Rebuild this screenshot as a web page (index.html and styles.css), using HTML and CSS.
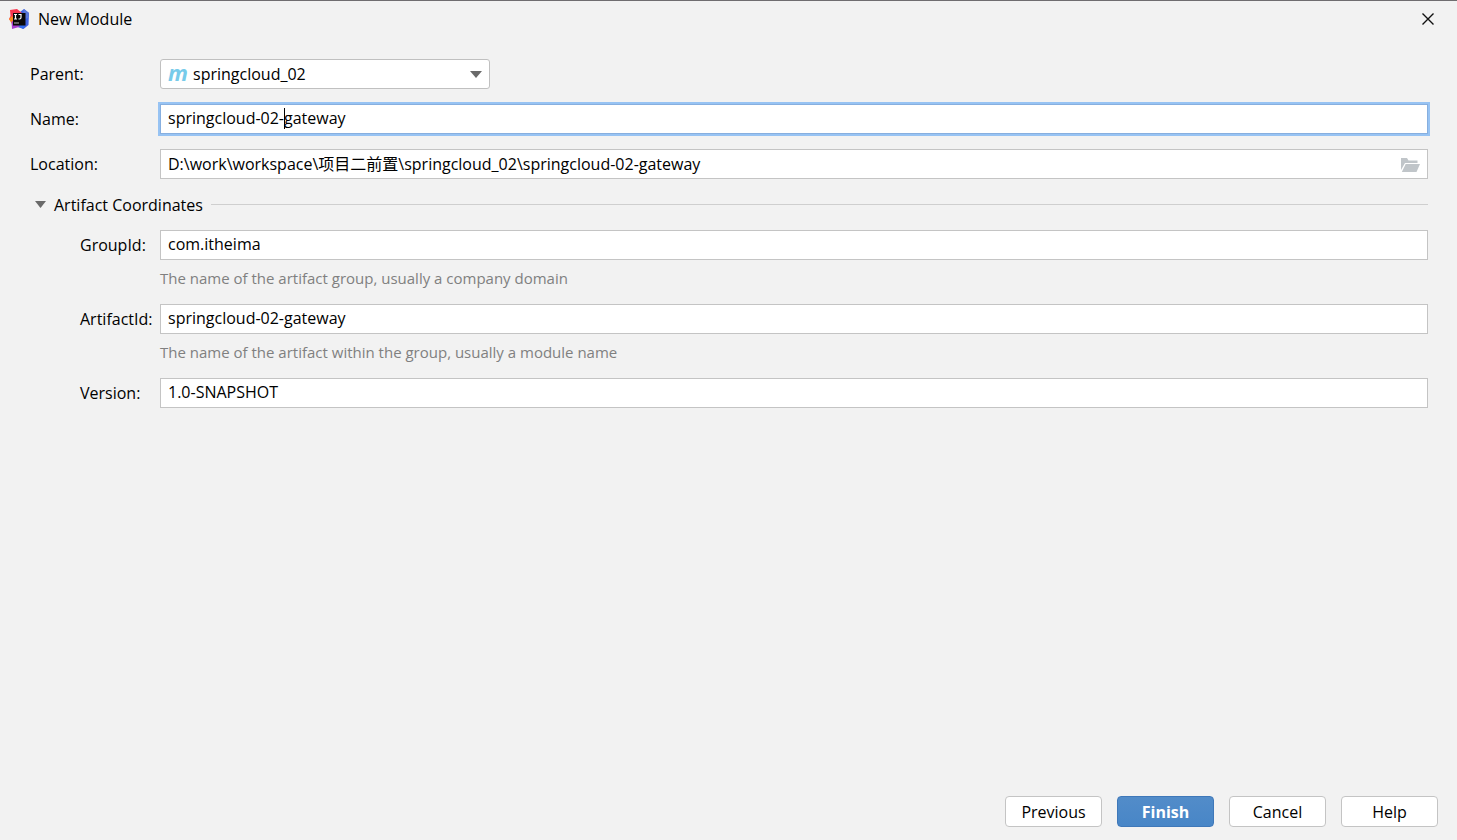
FILE: index.html
```html
<!DOCTYPE html>
<html lang="en">
<head>
<meta charset="utf-8">
<title>New Module</title>
<link rel="stylesheet" href="styles.css">
</head>
<body>
<form class="dialog">
  <header class="titlebar">
    <svg class="logo" width="20" height="20" viewBox="0 0 20 20" aria-hidden="true">
      <path d="M11 3 15 0l5 4-.5 12-5 4-6-2z" fill="#3f62e0"/>
      <path d="M15 0l5 4-1 5-6 2z" fill="#5a78d8"/>
      <path d="M1 1 8 0l5 4-2 7-8 3-3-4 1.500-3z" fill="#f8364f"/>
      <path d="M0 10l3-3 3 5-3 3z" fill="#fb8a1e"/>
      <path d="M2.500 13 6 10l7 6-3 2-7 2z" fill="#a63fd0"/>
      <path d="M9 16h7l-2 4z" fill="#2f6df0"/>
      <path d="M4 4h12.500v12.500H4z" fill="#0a0808"/>
      <path d="M5 5.500h3M6.500 5.500v4.500M5 10h3M9.500 5.500h2.500v3q0 1.500-1.500 1.500h-1" fill="none" stroke="#fff" stroke-width="1.200"/>
      <path d="M5 13.500h5v1H5z" fill="#bbb"/>
    </svg>
    <h1 class="title">New Module</h1>
    <button class="close" type="button" aria-label="Close">
      <svg width="14" height="14" viewBox="0 0 14 14" aria-hidden="true"><path d="M1.500 1.500l11 11M12.500 1.500l-11 11" stroke="#111" stroke-width="1.400" fill="none"/></svg>
    </button>
  </header>

  <main class="content">
    <div class="row">
      <label for="parent">Parent:</label>
      <div class="combo">
        <span class="maven" aria-hidden="true">m</span>
        <select id="parent"><option>springcloud_02</option></select>
        <svg class="arrow" width="12" height="7" viewBox="0 0 12 7" aria-hidden="true"><path d="M0 0h12L6 7z" fill="#6a6a6a"/></svg>
      </div>
    </div>
    <div class="row">
      <label for="name">Name:</label>
      <div class="box">
        <input class="field focused" id="name" type="text" value="springcloud-02-gateway">
        <span class="caret"></span>
      </div>
    </div>
    <div class="row">
      <label for="location">Location:</label>
      <div class="box">
        <input class="field" id="location" type="text" value="D:\work\workspace\项目二前置\springcloud_02\springcloud-02-gateway">
        <button class="browse" type="button" aria-label="Browse">
          <svg width="19" height="14" viewBox="0 0 19 14" aria-hidden="true"><path d="M0 0h6l1.500 2.500H16.500V5H4L0 12z" fill="#c0c5c9"/><path d="M4.700 6H19l-3.500 8H.800z" fill="#c0c5c9"/></svg>
        </button>
      </div>
    </div>

    <button class="section" type="button" aria-expanded="true">
      <svg width="11" height="7" viewBox="0 0 11 7" aria-hidden="true"><path d="M0 0h11L5.500 7z" fill="#6a6a6a"/></svg>
      <span>Artifact Coordinates</span>
      <span class="rule"></span>
    </button>

    <div class="row nested">
      <label for="group">GroupId:</label>
      <input class="field" id="group" type="text" value="com.itheima" aria-describedby="group-hint">
      <p class="hint" id="group-hint">The name of the artifact group, usually a company domain</p>
    </div>
    <div class="row nested">
      <label for="artifact">ArtifactId:</label>
      <input class="field" id="artifact" type="text" value="springcloud-02-gateway" aria-describedby="artifact-hint">
      <p class="hint" id="artifact-hint">The name of the artifact within the group, usually a module name</p>
    </div>
    <div class="row nested">
      <label for="version">Version:</label>
      <input class="field" id="version" type="text" value="1.0-SNAPSHOT">
    </div>
  </main>

  <footer class="actions">
    <button class="btn" type="button">Previous</button>
    <button class="btn primary" type="submit">Finish</button>
    <button class="btn" type="button">Cancel</button>
    <button class="btn" type="button">Help</button>
  </footer>
</form>
</body>
</html>
```

FILE: styles.css
```css
* {
  box-sizing: border-box;
}

body {
  margin: 0;
  background: #f2f2f2;
  color: #000;
}

body,
button,
input,
select {
  font-family: "Open Sans", "Noto Sans", "Noto Sans CJK SC", sans-serif;
  font-size: 16px;
  line-height: 20px;
}

.dialog {
  display: flex;
  flex-direction: column;
  min-height: 100vh;
  border-top: 1px solid #6f6d70;
}

.titlebar {
  display: flex;
  align-items: center;
  gap: 9px;
  height: 36px;
  padding: 0 22px 0 9px;
}

.title {
  flex: 1;
  margin: 0;
  font-size: 16px;
  font-weight: 400;
}

.close,
.browse {
  display: flex;
  padding: 0;
  border: 0;
  background: none;
}

.content {
  display: flex;
  flex: 1;
  flex-direction: column;
  gap: 15px;
  padding: 22px 29px 15px 30px;
}

.row {
  display: grid;
  grid-template-columns: 130px minmax(0, 1fr);
  align-items: center;
}

.nested {
  grid-template-columns: 80px minmax(0, 1fr);
  padding-left: 50px;
}

.box,
.combo {
  position: relative;
}

.combo {
  width: 330px;
}

.combo select {
  display: block;
  width: 100%;
  height: 30px;
  padding: 0 32px;
  border: 1px solid #c0c0c0;
  border-radius: 3px;
  background: #fff;
  color: #000;
  appearance: none;
}

.maven {
  position: absolute;
  left: 8px;
  top: 3px;
  color: #77cbea;
  font-size: 22px;
  font-style: italic;
  font-weight: 700;
}

.arrow {
  position: absolute;
  right: 8px;
  top: 12px;
  pointer-events: none;
}

.field {
  display: block;
  width: 100%;
  height: 30px;
  padding: 0 7px 2px;
  border: 1px solid #c4c4c4;
  border-radius: 0;
  background: #fff;
  color: #000;
  outline: none;
}

.focused {
  border-color: #87afdf;
  box-shadow: 0 0 0 2px #97c3f3;
}

.caret {
  position: absolute;
  left: 124px;
  top: 4px;
  width: 1px;
  height: 21px;
  background: #000;
}

.browse {
  position: absolute;
  right: 8px;
  top: 9px;
}

.section {
  display: flex;
  align-items: center;
  gap: 8px;
  height: 21px;
  padding: 0 0 0 5px;
  border: 0;
  background: none;
  color: #000;
}

.rule {
  flex: 1;
  height: 1px;
  background: #cfcfcf;
}

.hint {
  grid-column: 2;
  margin: 8px 0 1px;
  color: #808080;
  font-size: 15px;
}

.actions {
  display: flex;
  justify-content: flex-end;
  gap: 15px;
  padding: 0 19px 13px;
}

.btn {
  width: 97px;
  height: 31px;
  padding: 0;
  border: 1px solid #c4c4c4;
  border-radius: 4px;
  background: #fff;
  color: #000;
}

.primary {
  border-color: #3f78b9;
  background: linear-gradient(#528cc9, #4886c7);
  color: #fff;
  font-weight: 700;
}
```
